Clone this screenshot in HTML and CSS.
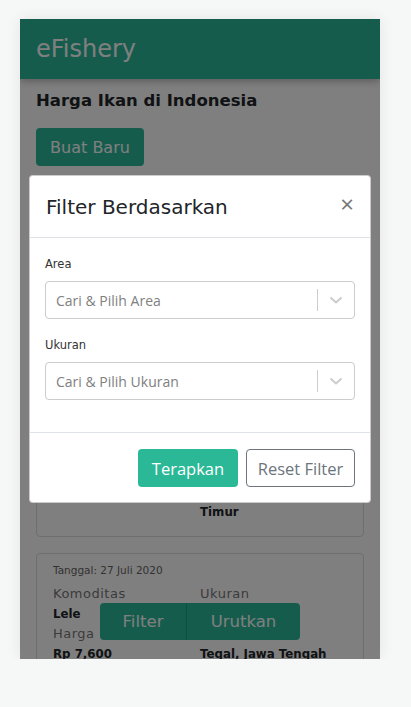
FILE: index.html
```html
<!DOCTYPE html>
<html lang="en">
<head>
    <meta charset="UTF-8">
    <meta name="viewport" content="width=device-width, initial-scale=1.0">
    <title>eFishery - Harga Ikan</title>
    <link rel="stylesheet" href="styles.css">
</head>
<body>
    <div class="app">
        <nav class="navbar">eFishery</nav>
        <main class="content">
            <h1 class="page-title">Harga Ikan di Indonesia</h1>
            <button class="btn btn-primary">Buat Baru</button>

            <div class="card-list">
                <div class="card">
                    <div class="card-date">Tanggal: 26 Juli 2020</div>
                    <div class="card-grid">
                        <div class="label">Komoditas</div>
                        <div class="label">Ukuran</div>
                        <div class="value">Bandeng</div>
                        <div class="value">80</div>
                        <div class="label">Harga</div>
                        <div class="label">Lokasi</div>
                        <div class="value">Rp 12,000</div>
                        <div class="value">Banyuwangi, Jawa Timur</div>
                    </div>
                </div>
                <div class="card">
                    <div class="card-date">Tanggal: 27 Juli 2020</div>
                    <div class="card-grid">
                        <div class="label">Komoditas</div>
                        <div class="label">Ukuran</div>
                        <div class="value">Lele</div>
                        <div class="value">100</div>
                        <div class="label">Harga</div>
                        <div class="label">Lokasi</div>
                        <div class="value">Rp 7,600</div>
                        <div class="value">Tegal, Jawa Tengah</div>
                    </div>
                </div>
            </div>
        </main>

        <div class="action-bar">
            <button class="action-btn">Filter</button>
            <button class="action-btn">Urutkan</button>
        </div>

        <div class="backdrop"></div>

        <div class="modal">
            <div class="modal-header">
                <h2 class="modal-title">Filter Berdasarkan</h2>
                <span class="modal-close">&times;</span>
            </div>
            <div class="modal-body">
                <div class="form-group">
                    <label class="form-label">Area</label>
                    <div class="select">
                        <span class="select-placeholder">Cari &amp; Pilih Area</span>
                        <span class="select-sep"></span>
                        <svg class="select-arrow" width="20" height="20" viewBox="0 0 20 20"><path d="M4.5 7.5 L10 12.5 L15.5 7.5" fill="none" stroke="#cccccc" stroke-width="2"/></svg>
                    </div>
                </div>
                <div class="form-group">
                    <label class="form-label">Ukuran</label>
                    <div class="select">
                        <span class="select-placeholder">Cari &amp; Pilih Ukuran</span>
                        <span class="select-sep"></span>
                        <svg class="select-arrow" width="20" height="20" viewBox="0 0 20 20"><path d="M4.5 7.5 L10 12.5 L15.5 7.5" fill="none" stroke="#cccccc" stroke-width="2"/></svg>
                    </div>
                </div>
            </div>
            <div class="modal-footer">
                <button class="btn btn-apply">Terapkan</button>
                <button class="btn btn-outline">Reset Filter</button>
            </div>
        </div>
    </div>
</body>
</html>
```

FILE: styles.css
```css
body {
    margin: 0;
    background-color: #f6f8f7;
    font-family: 'DejaVu Sans', sans-serif;
    color: #212529;
}
.app {
    position: relative;
    width: 360px;
    height: 640px;
    margin: 19px 0 0 20px;
    background-color: #ffffff;
    overflow: hidden;
    box-shadow: 0 0 14px rgba(0, 0, 0, 0.08);
}
.navbar {
    height: 60px;
    background-color: #2ab99b;
    color: #ffffff;
    font-size: 24px;
    line-height: 60px;
    padding-left: 16px;
    box-shadow: 0 2px 8px rgba(0, 0, 0, 0.3);
    position: relative;
}
.content {
    padding: 10px 16px 0 16px;
}
.page-title {
    font-size: 16.5px;
    font-weight: bold;
    margin: 0 0 15px 0;
    line-height: 24px;
}
.btn {
    font-family: 'Open Sans', sans-serif;
    font-size: 16.5px;
    border: 1px solid transparent;
    border-radius: 4px;
    padding: 0 12px;
    height: 38px;
    cursor: pointer;
}
.btn-primary {
    background-color: #2ab99b;
    color: #ffffff;
    font-family: 'DejaVu Sans', sans-serif;
    font-size: 16px;
    width: 108px;
    padding: 0;
}
.card-list {
    margin-top: 225px;
}
.card {
    border: 1px solid #dcdcdc;
    border-radius: 4px;
    padding: 10px 16px 14px 16px;
    margin-bottom: 16px;
}
.card-date {
    font-size: 10.5px;
    line-height: 12px;
    color: #666;
    margin-bottom: 8px;
}
.card-grid {
    display: grid;
    grid-template-columns: 147px 1fr;
    font-size: 13px;
    line-height: 20px;
}
.label {
    color: #777;
    letter-spacing: 0.5px;
}
.value {
    font-weight: bold;
    font-size: 11.8px;
}
.action-bar {
    position: absolute;
    left: 80px;
    bottom: 19px;
    width: 200px;
    height: 37px;
    display: flex;
    border-radius: 4px;
    overflow: hidden;
    background-color: #2ab99b;
}
.action-btn {
    flex: 1;
    border: none;
    background: transparent;
    color: #ffffff;
    font-family: 'DejaVu Sans', sans-serif;
    font-size: 16.5px;
    padding: 0;
}
.action-btn:first-child {
    flex: 0 0 87px;
    border-right: 1px solid rgba(0, 0, 0, 0.15);
}
.backdrop {
    position: absolute;
    inset: 0;
    background-color: rgba(0, 0, 0, 0.5);
}
.modal {
    position: absolute;
    left: 9px;
    top: 156px;
    width: 342px;
    background-color: #ffffff;
    border: 1px solid rgba(0, 0, 0, 0.2);
    border-radius: 4px;
    box-sizing: border-box;
}
.modal-header {
    display: flex;
    align-items: center;
    justify-content: space-between;
    height: 61px;
    padding: 0 16px;
    border-bottom: 1px solid #dee2e6;
}
.modal-title {
    margin: 0;
    font-size: 20px;
    font-weight: normal;
    color: #212529;
}
.modal-close {
    font-family: 'Open Sans', sans-serif;
    font-size: 24px;
    color: #777;
    line-height: 1;
    margin-top: -6px;
}
.modal-body {
    padding: 16px 15px 16px 15px;
}
.form-group {
    margin-bottom: 16px;
}
.form-label {
    display: block;
    font-size: 11.5px;
    line-height: 20px;
    margin-bottom: 7px;
    color: #333;
}
.select {
    display: flex;
    align-items: center;
    height: 38px;
    border: 1px solid #cccccc;
    border-radius: 4px;
    box-sizing: border-box;
    padding-left: 10px;
}
.select-placeholder {
    flex: 1;
    font-family: 'Open Sans', sans-serif;
    font-size: 14px;
    color: #808080;
}
.select-sep {
    width: 1px;
    height: 22px;
    background-color: #cccccc;
}
.select-arrow {
    margin: 0 8px;
}
.modal-footer {
    display: flex;
    justify-content: flex-end;
    gap: 8px;
    padding: 16px 15px 15px 15px;
    border-top: 1px solid #dee2e6;
}
.btn-apply {
    background-color: #2bb896;
    color: #ffffff;
    width: 100px;
    padding: 0;
}
.btn-outline {
    background-color: #ffffff;
    color: #6c757d;
    border-color: #6c757d;
    width: 109px;
    padding: 0;
}
```
